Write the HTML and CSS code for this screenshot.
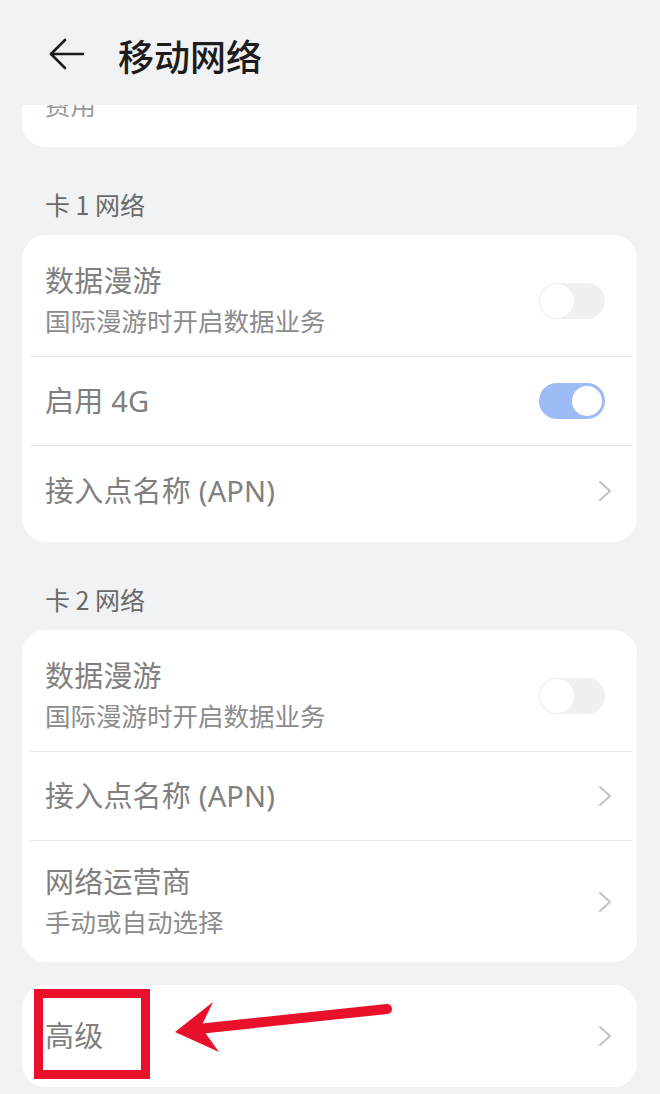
FILE: index.html
```html
<!DOCTYPE html>
<html lang="zh-CN">
<head>
<meta charset="utf-8">
<title>移动网络</title>
<link rel="stylesheet" href="styles.css">
</head>
<body>
<div class="page">
  <header class="header">
    <svg class="back" width="36" height="32" viewBox="0 0 36 32" fill="none" stroke="#1a1a1a" stroke-width="2.6" stroke-linecap="round" stroke-linejoin="round">
      <path d="M3 16H35"/>
      <path d="M17 2L3 16L17 30"/>
    </svg>
    <h1 class="title">移动网络</h1>
  </header>

  <div class="card card-clip">
    <span class="clip-text">费用</span>
  </div>

  <div class="label">卡 1 网络</div>
  <div class="card">
    <div class="row row-two">
      <div class="texts">
        <div class="row-title">数据漫游</div>
        <div class="row-sub">国际漫游时开启数据业务</div>
      </div>
      <span class="switch"><span class="knob"></span></span>
    </div>
    <div class="divider"></div>
    <div class="row row-one">
      <div class="row-title">启用 4G</div>
      <span class="switch on"><span class="knob"></span></span>
    </div>
    <div class="divider"></div>
    <div class="row row-one row-last">
      <div class="row-title">接入点名称 (APN)</div>
      <svg class="chev" width="14" height="22" viewBox="0 0 14 22" fill="none" stroke="#c2c2c2" stroke-width="2" stroke-linecap="round" stroke-linejoin="round"><path d="M2 2L12 11L2 20"/></svg>
    </div>
  </div>

  <div class="label">卡 2 网络</div>
  <div class="card">
    <div class="row row-two">
      <div class="texts">
        <div class="row-title">数据漫游</div>
        <div class="row-sub">国际漫游时开启数据业务</div>
      </div>
      <span class="switch"><span class="knob"></span></span>
    </div>
    <div class="divider"></div>
    <div class="row row-one">
      <div class="row-title">接入点名称 (APN)</div>
      <svg class="chev" width="14" height="22" viewBox="0 0 14 22" fill="none" stroke="#c2c2c2" stroke-width="2" stroke-linecap="round" stroke-linejoin="round"><path d="M2 2L12 11L2 20"/></svg>
    </div>
    <div class="divider"></div>
    <div class="row row-two row-two-last">
      <div class="texts">
        <div class="row-title">网络运营商</div>
        <div class="row-sub">手动或自动选择</div>
      </div>
      <svg class="chev" width="14" height="22" viewBox="0 0 14 22" fill="none" stroke="#c2c2c2" stroke-width="2" stroke-linecap="round" stroke-linejoin="round"><path d="M2 2L12 11L2 20"/></svg>
    </div>
  </div>

  <div class="card card-adv">
    <div class="row row-adv">
      <div class="row-title">高级</div>
      <svg class="chev" width="14" height="22" viewBox="0 0 14 22" fill="none" stroke="#c2c2c2" stroke-width="2" stroke-linecap="round" stroke-linejoin="round"><path d="M2 2L12 11L2 20"/></svg>
    </div>
    <div class="mark-box"></div>
    <svg class="mark-arrow" width="380" height="90" viewBox="0 0 380 90">
      <path d="M176 44L365 24" stroke="#e8102a" stroke-width="10" stroke-linecap="round" fill="none"/>
      <polygon points="153,47 191,17 179,42 197,67" fill="#e8102a"/>
    </svg>
  </div>
</div>
</body>
</html>
```

FILE: styles.css
```css
* { box-sizing: border-box; }

html, body {
  margin: 0;
  padding: 0;
  background: #f1f2f4;
}

body {
  font-family: "Noto Sans", "Noto Sans CJK SC", sans-serif;
  width: 660px;
}

.page {
  display: flex;
  flex-direction: column;
  padding: 0 23px 0 22px;
}

.header {
  height: 105px;
  display: flex;
  align-items: center;
  padding-top: 4px;
  padding-left: 26px;
}

.back {
  display: block;
  margin-top: -2px;
}

.title {
  margin: 0 0 0 34px;
  font-family: "Noto Sans CJK SC", sans-serif;
  font-size: 36px;
  font-weight: 500;
  color: #1c1c1c;
  line-height: 44px;
}

.card {
  background: #ffffff;
  border-radius: 24px;
  position: relative;
}

.card-clip {
  height: 42px;
  overflow: hidden;
  border-radius: 0 0 24px 24px;
}

.clip-text {
  display: block;
  margin-top: -18px;
  padding-left: 23px;
  font-family: "Noto Sans CJK SC", sans-serif;
  font-size: 25.5px;
  line-height: 34px;
  color: #9a9a9a;
}

.label {
  padding: 41px 0 15px 23px;
  font-family: "Noto Sans CJK SC", sans-serif;
  font-size: 25px;
  line-height: 32px;
  color: #6a6a6a;
}

.row {
  display: flex;
  align-items: center;
  justify-content: space-between;
  padding: 0 25px 0 23px;
}

.row-two {
  height: 121px;
  padding-top: 10px;
}

.row-two-last {
  height: 121px;
  padding-top: 0;
}

.row-one {
  height: 88px;
}

.row-last {
  height: 96px;
  padding-bottom: 6px;
}

.row-adv {
  height: 102px;
}

.row-title {
  font-size: 29px;
  line-height: 40px;
  color: #808080;
  letter-spacing: 0.2px;
}

.row-sub {
  font-size: 25.5px;
  line-height: 40px;
  color: #8c8c8c;
}

.divider {
  height: 1px;
  background: #e6e6e6;
  margin: 0 5px 0 8px;
}

.switch {
  width: 66px;
  height: 36px;
  border-radius: 18px;
  background: #f0f0f0;
  position: relative;
  margin-right: 7px;
  flex-shrink: 0;
}

.switch .knob {
  position: absolute;
  left: 1px;
  top: 1px;
  width: 34px;
  height: 34px;
  border-radius: 50%;
  background: #ffffff;
  box-shadow: 0 0 0 1px #ececec;
}

.switch.on {
  background: #9dbbf6;
}

.switch.on .knob {
  left: auto;
  right: 3px;
  top: 3px;
  width: 30px;
  height: 30px;
  box-shadow: none;
}

.chev {
  display: block;
  flex-shrink: 0;
}

.card-adv {
  margin-top: 23px;
}

.mark-box {
  position: absolute;
  left: 12px;
  top: 4px;
  width: 116px;
  height: 90px;
  border: 9px solid #e8102a;
}

.mark-arrow {
  position: absolute;
  left: 0;
  top: 0;
  overflow: visible;
}
```
